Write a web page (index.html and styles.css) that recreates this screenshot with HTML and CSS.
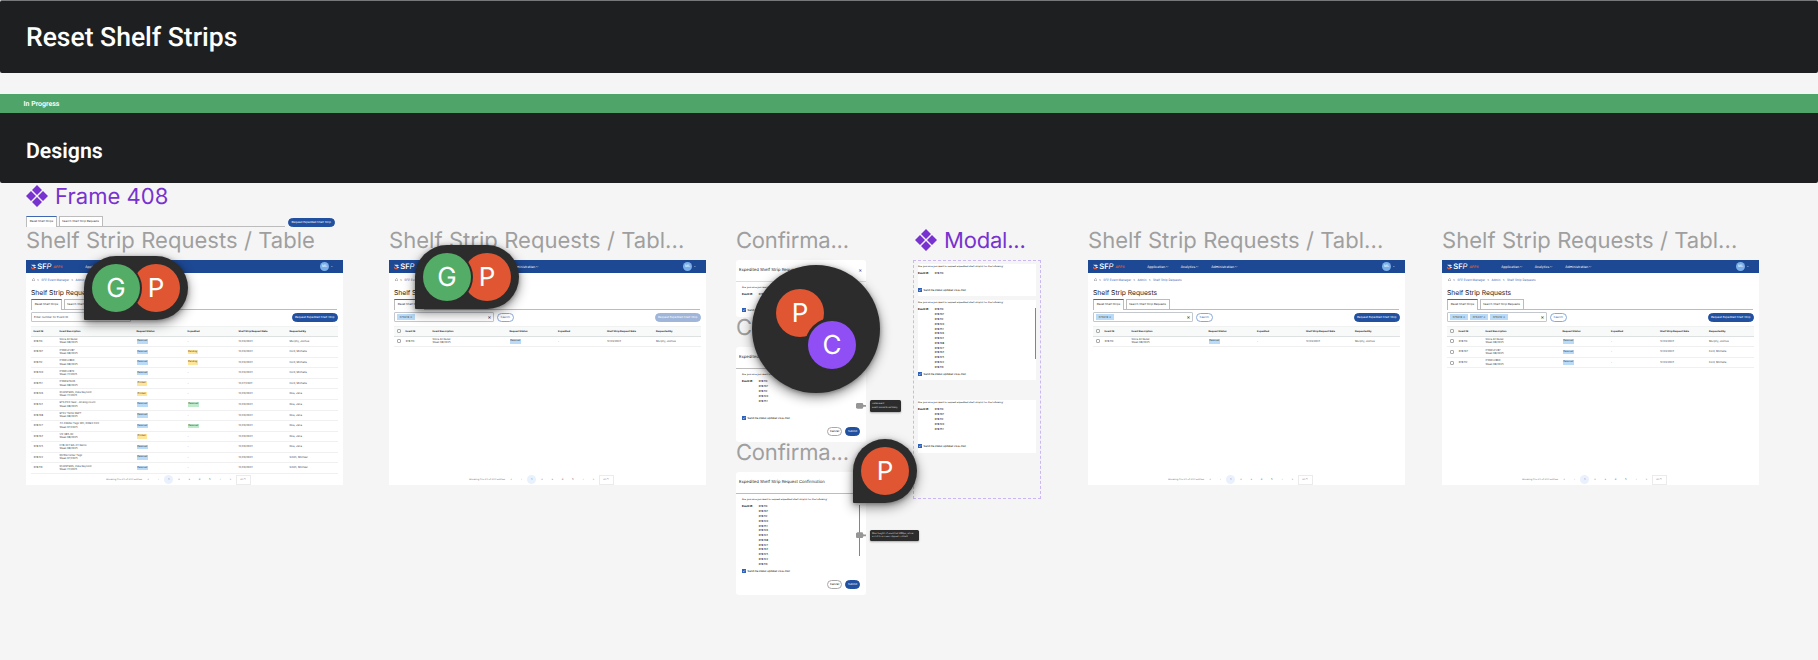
FILE: index.html
```html
<!DOCTYPE html>
<html lang="en">
<head>
  <meta charset="UTF-8">
  <meta name="viewport" content="width=device-width, initial-scale=1.0">
  <title>Reset Shelf Strips</title>
  <link rel="stylesheet" href="styles.css">
</head>
<body>
  <header class="section-bar page-title"><h1>Reset Shelf Strips</h1></header>
  <div class="status-bar">In Progress</div>
  <div class="section-bar section-title"><h2>Designs</h2></div>

  <main class="canvas">
    <div class="label component at-frame408"><svg viewBox="0 0 22 22"><path d="M11 0l5 5-5 5-5-5zM11 12l5 5-5 5-5-5zM5 6l5 5-5 5-5-5zM17 6l5 5-5 5-5-5z"/></svg>Frame 408</div>
    <section class="frame408">
      <div class="tabs"><span class="tab active">Reset Shelf Strips</span><span class="tab">Search Shelf Strip Requests</span></div>
      <span class="btn primary expedite">Request Expedited Shelf Strip</span>
    </section>

    <div class="label at-table1">Shelf Strip Requests / Table</div>
    <section class="frame frame-1" data-table="all"></section>

    <div class="label at-table2">Shelf Strip Requests / Tabl...</div>
    <section class="frame frame-2 selectable" data-table="empty"></section>

    <div class="label at-table3">Shelf Strip Requests / Tabl...</div>
    <section class="frame frame-3 selectable" data-table="one"></section>

    <div class="label at-table4">Shelf Strip Requests / Tabl...</div>
    <section class="frame frame-4 selectable" data-table="three"></section>

    <div class="label narrow at-confirm1">Confirma...</div>
    <section class="modal confirm-1" data-count="1"></section>
    <div class="label narrow at-confirm2">Confirma...</div>
    <section class="modal confirm-2" data-count="5"></section>
    <div class="label narrow at-confirm3">Confirma...</div>
    <section class="modal confirm-3" data-count="13"></section>

    <div class="label narrow component at-modal"><svg viewBox="0 0 22 22"><path d="M11 0l5 5-5 5-5-5zM11 12l5 5-5 5-5-5zM5 6l5 5-5 5-5-5zM17 6l5 5-5 5-5-5z"/></svg>Modal...</div>
    <section class="variants">
      <div class="variant variant-1" data-count="1"></div>
      <div class="variant variant-2" data-count="13"></div>
      <div class="variant variant-3" data-count="5"></div>
    </section>

    <div class="note note-1"><i></i><p>Same event<br>Event IDs sorts vertically</p></div>
    <div class="note note-2"><i></i><p>Max height of event list 260px, allow<br>scroll to access clipped content</p></div>

    <div class="pin pin-1"><span class="avatar green">G</span><span class="avatar red">P</span></div>
    <div class="pin pin-2"><span class="avatar green">G</span><span class="avatar red">P</span></div>
    <div class="cluster"><span class="avatar red">P</span><span class="avatar purple">C</span></div>
    <div class="pin pin-3"><span class="avatar red">P</span></div>
  </main>

  <script>
    var rows = [
      ['378419', 'Store All Reset', 'Week 38/2025', 'Received', '-', '12/29/2024', 'Murphy, Joshua'],
      ['378437', 'P10WLCV87', 'Week 38/2025', 'Received', 'Pending', '12/29/2024', 'Ford, Michelle'],
      ['378412', 'P10WLV860', 'Week 38/2025', 'Received', 'Pending', '12/29/2024', 'Ford, Michelle'],
      ['378420', 'P10WLV870', 'Week 41/2025', 'Received', '-', '12/29/2024', 'Ford, Michelle'],
      ['378451', 'P10WEITA26', 'Week 38/2025', 'Printed', '-', '12/27/2024', 'Ford, Michelle'],
      ['378426', 'QUANTERS, Kate Reynold', 'Week 41/2025', 'Printed', '-', '12/20/2024', 'Doe, Jane'],
      ['378424', 'BTS PCK Seal - Analog count', 'Week 38/2025', 'Received', 'Received', '12/20/2024', 'Doe, Jane'],
      ['378438', 'BTSV TECH DEPT', 'Week 38/2025', 'Received', '-', '12/20/2024', 'Doe, Jane'],
      ['378427', '42-FRESH Tags WC, DIREC CKF', 'Week 37/2025', 'Received', 'Received', '12/20/2024', 'Doe, Jane'],
      ['378434', 'VIF 985-02', 'Week 38/2025', 'Printed', '-', '12/20/2024', 'Doe, Jane'],
      ['378425', 'F48-924 BS-24 Retno', 'Week 38/2025', 'Received', '-', '12/20/2024', 'Doe, Jane'],
      ['378422', 'QtrWarranter Tags', 'Week 37/2025', 'Received', '-', '12/20/2024', 'Smith, Michael'],
      ['378413', 'QUANTERS, Kate Reynold', 'Week 41/2025', 'Received', '-', '12/20/2024', 'Smith, Michael']
    ];
    var views = {
      all: { rows: 13, chips: [] },
      empty: { rows: 1, chips: ['378419'], disabled: true },
      one: { rows: 1, chips: ['378419'] },
      three: { rows: 3, chips: ['378419', '378437', '378412'] }
    };
    var headers = ['Event ID', 'Event Description', 'Request Status', 'Expedited', 'Shelf Strip Request Date', 'Requested By'];
    var chevron = '<svg class="chevron" viewBox="0 0 6 4"><path d="M.5.5L3 3 5.5.5"/></svg>';

    function badge(text, expedited) {
      if (text === '-') return '<span>-</span>';
      var tone = text === 'Received' ? (expedited ? 'green' : 'blue') : 'yellow';
      return '<span><b class="badge ' + tone + '">' + text + '</b></span>';
    }

    function tableRow(r, selectable) {
      return '<div class="row"><span class="check"></span><span>' + r[0] + '</span><span>' + r[1] + '<br>' + r[2] +
        '</span>' + badge(r[3]) + badge(selectable ? '-' : r[4], true) + '<span>' + r[5] + '</span><span>' + r[6] + '</span></div>';
    }

    function renderFrame(el) {
      var view = views[el.dataset.table];
      var chips = view.chips.map(function (c) { return '<b class="chip">' + c + ' ✕</b>'; }).join('');
      var pages = ['«', '‹', '1', '2', '3', '4', '5', '›', '»'].map(function (p) {
        return '<span class="' + (p === '1' ? 'page current' : 'page') + '">' + p + '</span>';
      }).join('');
      el.innerHTML =
        '<div class="nav"><svg class="mark" viewBox="0 0 10 10"><path class="w" d="M0 1h7l2 2H3zM3 4h4l3 3H6z"/><path class="r" d="M0 4l3 3h3l2 2H2L0 7z"/></svg>' +
        '<strong>SF<em>P</em></strong><em class="apps">APPS</em>' +
        '<span class="link l1">Application ' + chevron + '</span><span class="link l2">Analytics ' + chevron +
        '</span><span class="link">Administration ' + chevron + '</span><span class="user">ML</span>' + chevron + '</div>' +
        '<div class="crumbs"><svg viewBox="0 0 8 8"><path d="M1 4l3-3 3 3v3H1z"/></svg><i>&gt;</i>SFP Event Manager<i>&gt;</i>Admin<i>&gt;</i>Shelf Strip Requests</div>' +
        '<h3>Shelf Strip Requests</h3>' +
        '<div class="tabs"><span class="tab active">Reset Shelf Strips</span><span class="tab">Search Shelf Strip Requests</span></div>' +
        '<div class="toolbar"><div class="search">' + (chips ? chips + '<b class="clear">✕</b>' : 'Enter number for Event ID') + '</div>' +
        (chips ? '<span class="btn outline find">Search</span>' : '') +
        '<span class="btn primary expedite' + (view.disabled ? ' disabled' : '') + '">Request Expedited Shelf Strip</span></div>' +
        '<div class="table"><div class="row head"><span class="check"></span>' +
        headers.map(function (h) { return '<span>' + h + '</span>'; }).join('') + '</div>' +
        rows.slice(0, view.rows).map(function (r) { return tableRow(r, view.chips.length); }).join('') + '</div>' +
        '<div class="pager"><span class="total">Showing 1 to 20 of 200 entries</span>' + pages + '<span class="size">20 ' + chevron + '</span></div>';
    }

    function eventBody(count) {
      var ids = [];
      for (var i = 0; i < count; i++) ids.push(rows[i][0]);
      return '<p class="ask">Are you sure you want to request expedited shelf strip(s) for the following:</p>' +
        '<div class="events"><b>Event ID</b><div>' + ids.join('<br>') + '</div></div>' +
        (count > 5 ? '<i class="scroll"></i>' : '') +
        '<div class="notify"><svg viewBox="0 0 8 8"><path d="M2 4l1.5 1.5L6.3 2.5"/></svg>Send me status updates via e-mail</div>';
    }

    document.querySelectorAll('.frame').forEach(renderFrame);
    document.querySelectorAll('.variant').forEach(function (el) {
      el.innerHTML = eventBody(+el.dataset.count);
    });
    document.querySelectorAll('.modal').forEach(function (el) {
      el.innerHTML = '<div class="modal-head">Expedited Shelf Strip Request Confirmation<span>✕</span></div>' +
        eventBody(+el.dataset.count) +
        '<div class="actions"><span class="btn cancel">Cancel</span><span class="btn primary">Submit</span></div>';
    });
  </script>
</body>
</html>
```
FILE: styles.css
```css
* {
  box-sizing: border-box;
}

body {
  margin: 0;
  height: 660px;
  position: relative;
  overflow: hidden;
  background: #f5f5f5;
  font-family: Inter, sans-serif;
  text-rendering: geometricPrecision;
}

h1, h2, h3, p { margin: 0; }

.section-bar {
  display: flex;
  align-items: center;
  padding-left: 26px;
  background: #1e1f21;
  color: #fff;
  font-family: Roboto, sans-serif;
}

.page-title {
  height: 73px;
  padding-top: 1px;
  border-top: 1px solid #77787a;
  border-radius: 2px;
  margin-bottom: 21px;
}

.page-title h1 {
  font-size: 26.5px;
  font-weight: 500;
}

.status-bar {
  height: 19px;
  padding-left: 23.5px;
  background: #4fa469;
  color: #fff;
  font: 600 7px/20px Roboto, sans-serif;
}

.section-title {
  height: 70px;
  padding-top: 6px;
  border-radius: 0 0 2px 2px;
}

.section-title h2 {
  font-size: 21.3px;
  font-weight: 600;
}

/* canvas labels */
.label {
  position: absolute;
  display: flex;
  align-items: center;
  height: 28px;
  padding-top: 2px;
  white-space: nowrap;
  font-size: 22px;
  letter-spacing: .05px;
  color: #9f9f9f;
}

.label.narrow { letter-spacing: -.2px; }

.label svg {
  width: 22px;
  height: 22px;
  margin: -2px 7px 0 0;
  fill: currentColor;
}

.label.component { color: #7732d0; }

.at-frame408 { left: 26px; top: 182px; }
.at-table1 { left: 26px; top: 226px; }
.at-table2 { left: 389px; top: 226px; }
.at-table3 { left: 1088px; top: 226px; }
.at-table4 { left: 1442px; top: 226px; }
.at-confirm1 { left: 736px; top: 226px; }
.at-confirm2 { left: 736px; top: 313px; }
.at-confirm3 { left: 736px; top: 438px; }
.at-modal { left: 915px; top: 226px; }

/* application frames */
.frame {
  position: absolute;
  top: 260px;
  display: flex;
  flex-direction: column;
  width: 317px;
  height: 225px;
  background: #fff;
  color: #4a4a4a;
  font-size: 2.5px;
  white-space: nowrap;
}

.frame-1 { left: 26px; }
.frame-2 { left: 389px; }
.frame-3 { left: 1088px; }
.frame-4 { left: 1442px; }

.chevron {
  width: 2.4px;
  height: 1.6px;
  fill: none;
  stroke: currentColor;
}

.nav {
  display: flex;
  align-items: center;
  flex: none;
  height: 13px;
  padding: 0 10px 0 5px;
  background: #1d4893;
  color: #fff;
}

.mark { width: 5.5px; height: 6px; margin-right: .7px; }
.mark .w { fill: #dfe6f5; }
.mark .r { fill: #e8603a; }

.nav strong { width: 16px; font-size: 7.6px; font-weight: 600; }
.nav strong em { font-weight: 400; }
.apps { width: 32px; font-size: 3.5px; font-weight: 700; color: #d9583c; }
.link { width: 30.5px; font-size: 3.4px; white-space: nowrap; }
.link.l1 { width: 33.5px; }

.user {
  width: 9px;
  height: 9px;
  margin: 0 1.5px 0 auto;
  border-radius: 50%;
  background: #79afea;
  font-size: 3.6px;
  line-height: 9px;
  text-align: center;
}

.crumbs {
  display: flex;
  align-items: center;
  flex: none;
  height: 13.5px;
  padding-left: 5.5px;
  color: #3c6ab8;
  font-size: 3px;
}

.crumbs svg { width: 3.4px; height: 3.4px; fill: none; stroke: #555; }
.crumbs i { margin: 0 2.2px; color: #555; font-style: normal; }

h3 {
  flex: none;
  height: 12px;
  padding-left: 5px;
  color: #222;
  font-size: 6.7px;
  font-weight: 400;
  line-height: 12px;
}

.tabs {
  display: flex;
  flex: none;
  gap: 1.5px;
  height: 11px;
  border-bottom: 1px solid #bcbcbc;
}

.frame .tabs { width: 306px; margin-left: 5px; }

.tab {
  width: 44px;
  height: 10px;
  border: 1px solid #bcbcbc;
  border-bottom: 0;
  background: #fff;
  color: #333;
  font-size: 2.8px;
  line-height: 9.5px;
  text-align: center;
  white-space: nowrap;
}

.tab.active {
  width: 31px;
  height: 11px;
  border-top-color: #3f68b4;
}

.toolbar {
  display: flex;
  align-items: center;
  flex: none;
  gap: 3px;
  height: 10px;
  margin: 2.5px 5px 4px;
}

.search {
  display: flex;
  align-items: center;
  gap: 2px;
  width: 100px;
  height: 9.5px;
  padding: 0 2px;
  border: 1px solid #c4c8cd;
  border-radius: 1px;
  font-size: 2.8px;
}

.chip {
  width: 18px;
  height: 6px;
  background: #b9dbf7;
  font-size: 2.8px;
  font-weight: 400;
  line-height: 6px;
  text-align: center;
}

.clear { margin-left: auto; font-size: 4px; }

.btn {
  width: 15px;
  height: 9px;
  border: 1px solid #a8a8a8;
  border-radius: 5px;
  background: #fff;
  font-size: 2.8px;
  line-height: 7px;
  text-align: center;
  white-space: nowrap;
}

.btn.primary { border-color: #2150a0; background: #2150a0; color: #fff; }
.btn.outline { width: 16.5px; border-color: #8ba9d8; color: #3766b4; }
.btn.expedite { width: 46.5px; margin-left: auto; }
.btn.primary.disabled { border-color: #9fb5d9; background: #9fb5d9; }

.table { margin: 0 5px; }

.row {
  display: grid;
  grid-template-columns: 26px 77px 51px 51px 51px 48px;
  align-items: center;
  height: 10.56px;
  padding-left: 2.5px;
  border-bottom: 1px solid #f0f0f0;
  font-size: 2.6px;
  line-height: 3.4px;
}

.check { display: none; }

.selectable .row {
  grid-template-columns: 9px 27px 77px 48.5px 49px 49px 43px;
}

.selectable .check {
  display: block;
  width: 4px;
  height: 4px;
  border: 1px solid #aaa;
  border-radius: 1px;
}

.row.head {
  height: 10.7px;
  border-top: 1px solid #f0f1f1;
  border-bottom-color: #dde1e1;
  background: #f8f9f9;
  color: #222;
  font-size: 2.45px;
  font-weight: 700;
}

.badge {
  display: inline-block;
  width: 11.5px;
  height: 4.6px;
  font-size: 2.3px;
  font-weight: 400;
  line-height: 4.6px;
  text-align: center;
  vertical-align: middle;
}

.badge.blue { background: #b9dbf7; }
.badge.yellow { width: 10px; background: #fde59a; }
.badge.green { background: #bfe9cb; }

.pager {
  display: flex;
  align-items: center;
  height: 10.5px;
  margin-top: auto;
  padding-left: 80px;
  font-size: 2.5px;
  color: #666;
}

.total { width: 37.5px; }

.page {
  width: 9.4px;
  height: 9.4px;
  margin-right: .9px;
  border-radius: 50%;
  line-height: 9.4px;
  text-align: center;
}

.page.current { background: #e9f1fd; color: #27549f; }

.size {
  width: 14.5px;
  height: 10.5px;
  border: 1px solid #ebebeb;
  line-height: 8.5px;
  text-align: center;
}

.frame408 {
  position: absolute;
  left: 26px;
  top: 216px;
  display: flex;
  width: 308.5px;
}

.frame408 .tabs { width: 259px; }
.frame408 .btn { margin-top: 2px; }

/* modals */
.modal {
  position: absolute;
  left: 736px;
  display: flex;
  flex-direction: column;
  width: 130px;
  border-radius: 3px;
  background: #fff;
}

.confirm-1 { top: 260px; height: 57px; overflow: hidden; }
.confirm-2 { top: 347px; height: 95px; }
.confirm-3 { top: 472px; height: 123px; }

.modal-head {
  display: flex;
  justify-content: space-between;
  align-items: center;
  flex: none;
  height: 22px;
  padding: 0 4px 0 3px;
  border-bottom: 1px solid #bdbdbd;
  color: #222;
  font-size: 4.2px;
  font-weight: 400;
  white-space: nowrap;
}

.confirm-1 .modal-head { border-bottom-color: #ddd; }

.ask {
  height: 5px;
  font-size: 2.45px;
  line-height: 5px;
  white-space: nowrap;
}

.modal .ask { margin: 3px 0 0 6px; }

.events {
  display: flex;
  margin-top: 2.4px;
  font-size: 2.6px;
  line-height: 4.78px;
}

.events b { width: 16.5px; }
.modal .events { padding-left: 6px; }

.notify {
  display: flex;
  align-items: center;
  gap: 1.5px;
  height: 4px;
  margin-top: auto;
  font-size: 2.6px;
  white-space: nowrap;
}

.notify svg {
  width: 4px;
  height: 4px;
  background: #2f62b8;
  fill: none;
  stroke: #fff;
}

.modal .notify { padding-left: 6px; }
.confirm-1 .notify { margin: auto 0 5px; }
.confirm-1 .actions { display: none; }

.actions {
  display: flex;
  justify-content: flex-end;
  gap: 3px;
  margin: 7.5px 6px 6px 0;
}

.scroll {
  position: absolute;
  right: 6px;
  top: 33px;
  width: 1px;
  height: 51px;
  background: #858585;
}

.variants {
  position: absolute;
  left: 913px;
  top: 260px;
  width: 128px;
  height: 239px;
  padding: 3px 4px;
  border: 1px dashed #cbb8f3;
}

.variant {
  position: relative;
  display: flex;
  flex-direction: column;
  width: 118px;
  background: #fff;
}

.variant-1 { height: 32px; margin-bottom: 4px; padding-bottom: 4.3px; }
.variant-2 { height: 80px; margin-bottom: 20px; padding-bottom: 3.7px; }
.variant-3 { height: 53px; padding-bottom: 5.3px; }
.variant .scroll { right: 0; top: 8px; }

/* annotations */
.note {
  position: absolute;
  left: 856px;
  display: flex;
  align-items: center;
  gap: 4px;
}

.note i {
  width: 10px;
  height: 6px;
  background: #969696;
  clip-path: polygon(0 15%, 15% 0, 65% 0, 75% 35%, 100% 35%, 100% 65%, 75% 65%, 65% 100%, 15% 100%, 0 85%);
}

.note p {
  width: 31px;
  padding: 2.2px 2px;
  border-radius: 1.5px;
  background: #2c2c2c;
  box-shadow: 0 1px 2px rgba(0, 0, 0, .3);
  color: #ddd;
  font-size: 2.2px;
  line-height: 3.6px;
  white-space: nowrap;
}

.note-1 { top: 400px; }
.note-2 { top: 529.5px; }
.note-2 p { width: 48.5px; font-size: 2.4px; }

/* comment pins */
.pin, .cluster {
  position: absolute;
  background: #2c2c2c;
  box-shadow: 0 4px 12px rgba(0, 0, 0, .45), 0 1px 4px rgba(0, 0, 0, .3);
}

.pin {
  display: flex;
  height: 64px;
  padding: 8px;
  border-radius: 32px 32px 32px 1px;
}

.pin-1 { left: 84px; top: 256px; }
.pin-2 { left: 415px; top: 245px; }
.pin-3 { left: 853px; top: 439px; }

.avatar {
  width: 48px;
  height: 48px;
  border-radius: 50%;
  color: #fff;
  font-size: 26px;
  line-height: 49px;
  text-align: center;
}

.avatar + .avatar { margin-left: -8px; }
.red { background: #e05633; }

.avatar.green {
  position: relative;
  z-index: 1;
  background: #53ad66;
  box-shadow: 0 0 0 2px #2c2c2c;
}

.cluster {
  left: 752px;
  top: 265px;
  width: 128px;
  height: 128px;
  padding: 24px;
  border-radius: 50%;
}

.cluster .avatar { display: block; }
.cluster .avatar + .avatar { margin: -16px 0 0 32px; }

.avatar.purple {
  position: relative;
  background: #8f4ff5;
  box-shadow: 0 0 0 3px #2c2c2c;
}
```
